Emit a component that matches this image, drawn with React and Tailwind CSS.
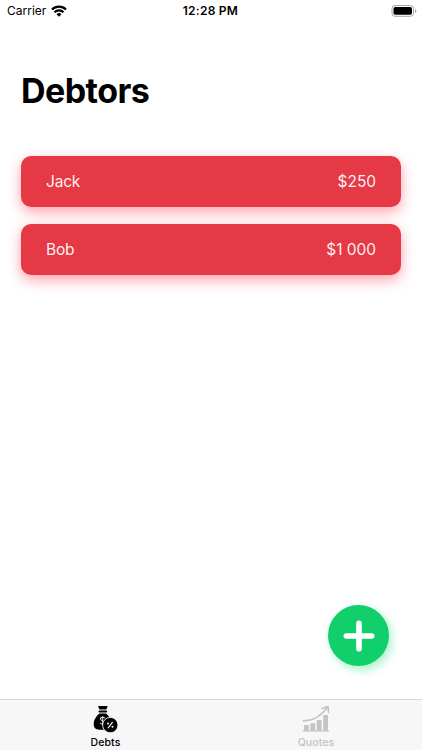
function WifiIcon() {
  return (
    <svg className="ml-[5px] h-[12px] w-[16px]" viewBox="0 0 15 11" fill="none">
      <path d="M.9 4.1a9.4 9.4 0 0 1 13.2 0" stroke="#000" strokeWidth="2.2" />
      <path d="M3.3 6.6a6 6 0 0 1 8.4 0" stroke="#000" strokeWidth="2" />
      <path d="M5.2 8.5a3.3 3.3 0 0 1 4.6 0L7.5 10.9z" fill="#000" />
    </svg>
  );
}

function BatteryIcon() {
  return (
    <svg className="h-[12px] w-[26px]" viewBox="0 0 26 12">
      <rect x="1" y=".5" width="21.5" height="10.8" rx="3" fill="none" stroke="#a5a5a5" />
      <rect x="2.5" y="2" width="18.5" height="7.8" rx="1.7" fill="#000" />
      <path d="M24 4v4q1.400-.6 1.400-2t-1.400-2" fill="#a5a5a5" />
    </svg>
  );
}

function DebtsIcon() {
  return (
    <svg className="h-[28px] w-[26px]" viewBox="0 0 26 28">
      <path d="M5.700.9h8.200q.8 0 .6.800L13.300 4.500H6.500L5.200 1.700Q5 .9 5.700.9z" fill="#000" />
      <rect x="5.500" y="5.500" width="8.700" height="2.100" rx="1" fill="#000" />
      <path d="M6.500 8.500h6.500c3.200 2.600 5.900 6.400 5.900 10.600 0 3.800-2 5.700-5.400 5.700H6.500c-3.700 0-5.800-1.900-5.800-5.700 0-4.200 2.600-8.100 5.800-10.600z" fill="#000" />
      <path d="M11.900 13.300c-.5-.7-1.300-1-2.200-1-1.300 0-2.200.7-2.200 1.700 0 2.200 4.200 1.200 4.200 3.500 0 1.100-.9 1.700-2.100 1.700-1 0-1.900-.4-2.400-1.200M9.700 11.100v9.200" fill="none" stroke="#d8d8d8" strokeWidth="1.100" />
      <circle cx="17.300" cy="20.100" r="7.700" fill="#000" stroke="#f7f7f7" strokeWidth=".9" />
      <path d="M19.400 17.400l-4.300 5.400" stroke="#f7f7f7" strokeWidth="1.100" strokeLinecap="round" />
      <circle cx="15" cy="18.400" r="1" fill="#f7f7f7" />
      <circle cx="19.500" cy="21.700" r="1" fill="#f7f7f7" />
    </svg>
  );
}

function QuotesIcon() {
  return (
    <svg className="h-[28px] w-[28px]" viewBox="0 0 28 28" fill="#c4c4c4">
      <path d="M2 20h4.800v5.400H2zM8.300 18.300h4.800v7.100H8.300zM14.700 15h4.800v10.400h-4.800zM21.200 10H26v15.400h-4.800z" />
      <path d="M.7 25.400h26.300v1.200H.7z" />
      <path d="M1.500 15.900C10.500 16 19 11.300 25.800 1.900M20.200 3.500l5.800-2.100.5 6" fill="none" stroke="#c4c4c4" strokeWidth="1.600" strokeLinecap="round" strokeLinejoin="round" />
    </svg>
  );
}

function DebtCard({ name, amount }) {
  return (
    <li className="flex h-[51px] items-center justify-between rounded-[10px] bg-[#e63946] px-[25px] pt-px text-[15.5px] text-white/95 shadow-[0_5px_14px_rgba(255,35,60,0.42)]">
      <span className="tracking-[-0.2px]">{name}</span>
      <span className="tracking-[-0.05px]">{amount}</span>
    </li>
  );
}

export default function App() {
  return (
    <div className="flex h-[750px] w-[422px] flex-col overflow-hidden bg-white font-[Inter,sans-serif] text-black">
      <header className="grid h-[22px] shrink-0 grid-cols-3 items-center pr-[5px] pl-[7px] text-[12px]">
        <div className="flex items-center">
          <span>Carrier</span>
          <WifiIcon />
        </div>
        <span className="pr-[3px] text-center font-semibold tracking-[0.25px]">12:28 PM</span>
        <div className="flex justify-end"><BatteryIcon /></div>
      </header>
      <main className="flex flex-1 flex-col px-[21px]">
        <h1 className="mt-[49px] text-[34px] leading-[40px] font-bold tracking-[-0.55px]">Debtors</h1>
        <ul className="mt-[45px] flex flex-col gap-[17px]">
          <DebtCard name="Jack" amount="$250" />
          <DebtCard name="Bob" amount="$1 000" />
        </ul>
        <button className="mt-auto mr-[12px] mb-[33px] flex size-[61px] items-center justify-center self-end rounded-full bg-[#11cf6b] shadow-[3px_4px_10px_rgba(17,220,110,0.36)]" aria-label="Add debt">
          <svg className="size-[32px]" viewBox="0 0 32 32" stroke="#fff" strokeWidth="5.600" strokeLinecap="round">
            <path d="M16 3.300v25.400M3.300 16h25.400" />
          </svg>
        </button>
      </main>
      <nav className="grid h-[51px] shrink-0 grid-cols-2 border-t border-[#d8d8d8] bg-[#f7f7f7] text-[10.500px] leading-[14px] font-medium tracking-[0.1px]">
        <div className="flex flex-col items-center pt-[5px]">
          <DebtsIcon />
          <span className="mt-[3px]">Debts</span>
        </div>
        <div className="flex flex-col items-center pt-[5px] pr-px text-[#c4c4c4]">
          <QuotesIcon />
          <span className="mt-[3px]">Quotes</span>
        </div>
      </nav>
    </div>
  );
}
